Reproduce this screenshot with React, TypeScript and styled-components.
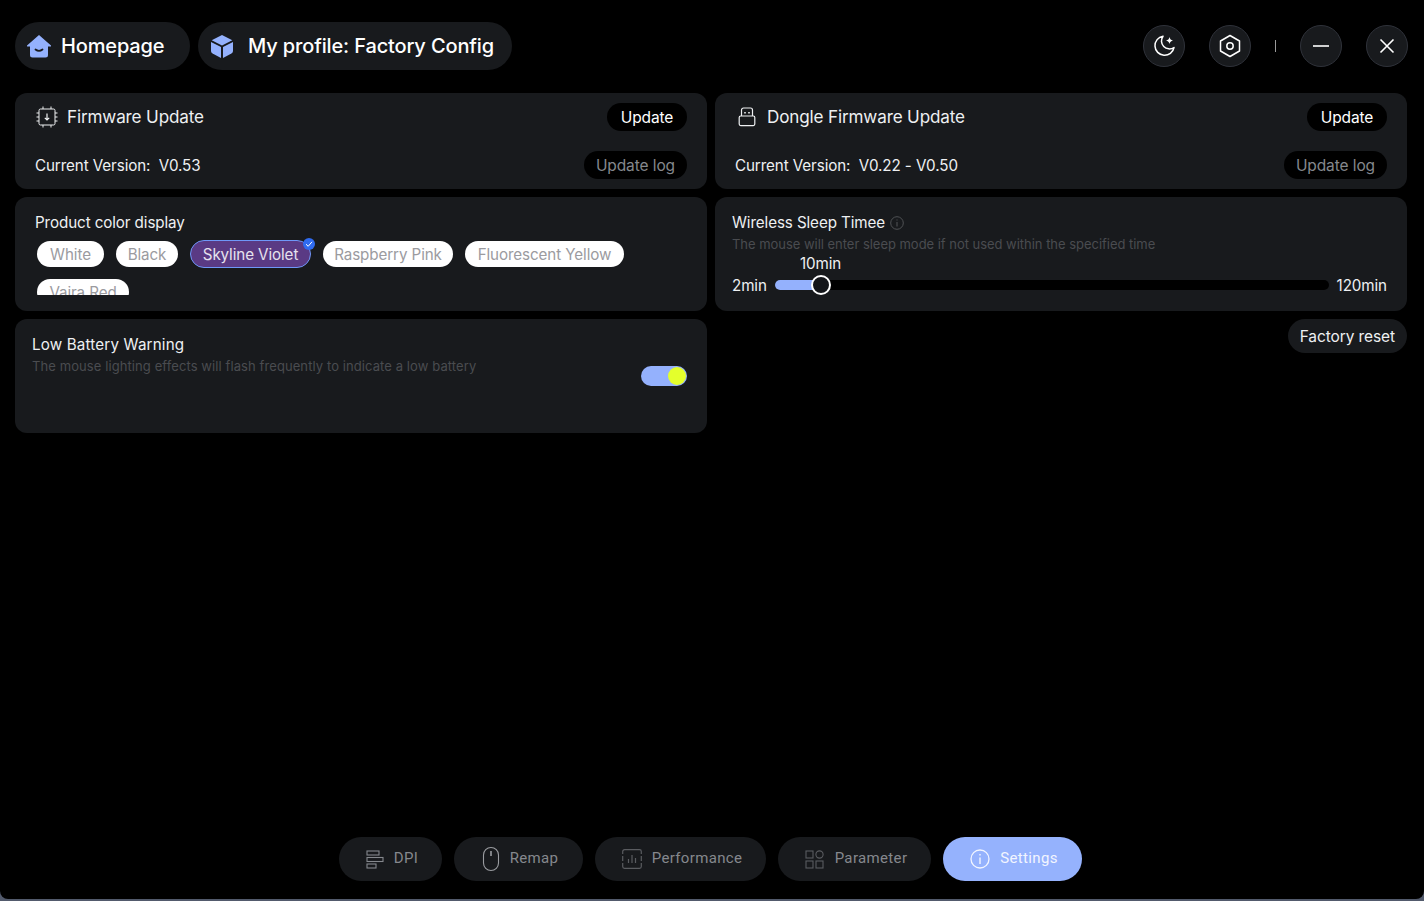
import React from "react";
import styled, { createGlobalStyle } from "styled-components";

const Global = createGlobalStyle`
  html, body { margin: 0; padding: 0; background: #4d5566; }
  body { font-family: "Inter", "Liberation Sans", sans-serif; overflow: hidden; }
  * { box-sizing: border-box; }
`;

const Screen = styled.div`
  width: 1424px; height: 901px; background: #525a6c; overflow: hidden;
`;
const Win = styled.div`
  width: 1424px; height: 899px; background: #000; border-radius: 0 0 8px 8px;
  padding: 22px 17px 18px 15px; display: flex; flex-direction: column;
`;
const Header = styled.header`
  display: flex; align-items: center; height: 48px; margin-bottom: 23px;
`;
const TopPill = styled.div<{ $w: number; $gap: number; $pl: number }>`
  width: ${p => p.$w}px; height: 48px; border-radius: 24px; background: #181a1d;
  display: flex; align-items: center; gap: ${p => p.$gap}px; padding-left: ${p => p.$pl}px;
  color: #fff; font-size: 20px; font-weight: 500; margin-right: 8px; white-space: nowrap;
  letter-spacing: -0.14px;
`;
const Right = styled.div`
  margin-left: auto; display: flex; align-items: center; margin-right: -1px;
`;
const RoundBtn = styled.button<{ $ml: number }>`
  width: 42px; height: 42px; border-radius: 50%; background: #181a1d; border: 1px solid #2f323a;
  display: flex; align-items: center; justify-content: center; padding: 0; margin-left: ${p => p.$ml}px;
`;
const Divider = styled.span`
  width: 1px; height: 12px; background: #9a9a9a; margin-left: 24px;
`;
const Grid = styled.main`
  display: grid; grid-template-columns: 692px 692px; gap: 8px; grid-template-rows: 96px 114px 114px;
`;
const Panel = styled.section`
  background: #181a1d; border-radius: 12px; position: relative; color: #fff; min-width: 0; overflow: hidden;
`;
const UpdatePanel = styled(Panel)`
  padding: 10px 20px 10px 20px; display: flex; flex-direction: column; justify-content: space-between;
`;
const Row = styled.div`
  display: flex; align-items: center; justify-content: space-between; height: 28px;
`;
const TitleWrap = styled.div<{ $gap: number; $pl: number }>`
  display: flex; align-items: center; gap: ${p => p.$gap}px; padding-left: ${p => p.$pl}px;
  font-size: 17.1px; line-height: 26px; color: #eef0f2; letter-spacing: -0.15px; margin-top: -1px;
`;
const Version = styled.div`
  font-size: 15.2px; color: #eef0f2; white-space: pre; letter-spacing: -0.1px;
`;
const SmallBtn = styled.button<{ $dim?: boolean }>`
  height: 28px; min-width: 80px; padding: 0 12px; border-radius: 14px; background: #000; border: none;
  font-family: inherit; font-size: 15.5px; letter-spacing: -0.1px; color: ${p => (p.$dim ? "#85888d" : "#fff")};
  white-space: nowrap;
`;
const ColorPanel = styled(Panel)`
  padding: 16px 20px 0;
`;
const SectionTitle = styled.div<{ $ls?: number }>`
  font-size: 15.2px; color: #eef0f2; line-height: 20px; letter-spacing: ${p => p.$ls ?? -0.1}px; white-space: nowrap;
`;
const ChipArea = styled.div`
  display: flex; flex-wrap: wrap; gap: 12px; height: 72px; margin-top: 8px; padding: 0 2px; align-content: flex-start;
  clip-path: inset(-4px -8px 18px -8px);
`;
const Chip = styled.div<{ $active?: boolean; $w: number }>`
  width: ${p => p.$w}px; height: ${p => (p.$active ? 28 : 26)}px; margin: ${p => (p.$active ? "-1px 0" : "0")};
  border-radius: 14px; position: relative;
  display: flex; align-items: center; justify-content: center; font-size: 15.2px; letter-spacing: -0.1px; white-space: nowrap;
  background: ${p => (p.$active ? "#5a3a84" : "#fff")};
  color: ${p => (p.$active ? "#e6e2ee" : "#9b9b9f")};
  border: ${p => (p.$active ? "1.5px solid #6f97f8" : "none")};
`;
const Badge = styled.span`
  position: absolute; top: -3px; right: -5px; width: 12px; height: 12px; border-radius: 50%; background: #2f6bf0;
  display: flex; align-items: center; justify-content: center;
`;
const SettingPanel = styled(Panel)`
  padding: 16px 20px 0 17px;
`;
const Desc = styled.div<{ $ls: number }>`
  font-size: 13px; color: #4a4c50; line-height: 18px; margin-top: 2px; white-space: nowrap; letter-spacing: ${p => p.$ls}px;
`;
const InlineTitle = styled.div`
  display: flex; align-items: center; gap: 5px;
`;
const SliderRow = styled.div`
  display: flex; align-items: center; gap: 8px; font-size: 15.2px; color: #eef0f2; height: 20px; margin-top: 22px; position: relative; letter-spacing: -0.1px;
`;
const Track = styled.div`
  flex: 1; height: 10px; border-radius: 5px; background: #000; position: relative;
`;
const Fill = styled.div`
  height: 10px; background: #94b1fd; border-radius: 5px 0 0 5px;
`;
const Knob = styled.div`
  position: absolute; top: -5px; width: 20px; height: 20px; border-radius: 50%; background: #14161a; border: 2px solid #fff; margin-left: -10px;
`;
const Tip = styled.div`
  position: absolute; top: -20px; left: 68px; width: 41px; white-space: nowrap; text-align: center; line-height: 18px;
`;
const Toggle = styled.div`
  position: absolute; left: 626px; top: 47px; width: 46px; height: 20px; border-radius: 10px; background: #94b1fd;
`;
const ToggleDot = styled.div`
  position: absolute; right: 1px; top: 1px; width: 18px; height: 18px; border-radius: 50%; background: #e4ff2c;
`;
const ResetCell = styled.div`
  display: flex; justify-content: flex-end; align-items: flex-start;
`;
const ResetBtn = styled.button`
  height: 34px; padding: 0 12px; border-radius: 17px; background: #181a1d; border: none; color: #eef0f2; font-family: inherit; font-size: 15.5px; letter-spacing: -0.1px;
`;
const Nav = styled.nav`
  margin-top: auto; margin-right: 1px; display: flex; justify-content: center; gap: 12px;
`;
const NavItem = styled.button<{ $w: number; $active?: boolean }>`
  width: ${p => p.$w}px; height: 44px; border-radius: 22px; border: none; padding: 0 0 0 3px;
  background: ${p => (p.$active ? "#95b2fd" : "#181a1d")};
  color: ${p => (p.$active ? "#f2f5ff" : "#85888d")};
  display: flex; align-items: center; justify-content: center; gap: 10px;
  font-family: Roboto, sans-serif; font-size: 15px; font-weight: 400; letter-spacing: 0.35px;
`;
const NavLabel = styled.span`
  margin-bottom: 2px;
`;

const HomeIcon = () => (
  <svg width="24" height="24" viewBox="0 0 24 24">
    <path d="M12 1 L24 11.5 a.6.6 0 0 1-.5 1 H21 V21 a2.5 2.5 0 0 1-2.5 2.5 H5.5 A2.5 2.5 0 0 1 3 21 V12.5 H.5 a.6.6 0 0 1-.5-1 Z" fill="#94b1fd" />
    <path d="M8.5 15.5 q3.5 2.6 7 0" stroke="#181a1d" strokeWidth="1.8" fill="none" strokeLinecap="round" />
  </svg>
);
const CubeIcon = () => (
  <svg width="24" height="24" viewBox="0 0 24 24" fill="#94b1fd">
    <path d="M12 1 L22.3 6.3 L12 11.4 L1.7 6.3 Z" />
    <path d="M1 8 L11 13 V24 L2.6 19.6 A3 3 0 0 1 1 17 Z" />
    <path d="M23 8 L13 13 V24 L21.4 19.6 A3 3 0 0 0 23 17 Z" />
  </svg>
);
const ChipIcon = () => (
  <svg width="22" height="22" viewBox="0 0 22 22" fill="none" stroke="#eef0f2" strokeWidth="1">
    <rect x="3" y="3" width="16" height="16" rx="1.5" />
    <path d="M7 3V0.5M15 3V0.5M7 21.5V19M15 21.5V19M0.5 7H3M0.5 11H3M0.5 15H3M19 7H21.5M19 11H21.5M19 15H21.5" />
    <path d="M11 7.5V13.5M8.8 11.8L11 14L13.2 11.8" strokeWidth="1.2" />
  </svg>
);
const DongleIcon = () => (
  <svg width="18" height="20" viewBox="0 0 18 20" fill="none" stroke="#eef0f2" strokeWidth="1.2">
    <path d="M3.5 9V3a2 2 0 0 1 2-2h7a2 2 0 0 1 2 2v6" />
    <rect x="1.2" y="9" width="15.6" height="9.6" rx="1.5" />
    <path d="M7 5v1.6M11 5v1.6" strokeWidth="1.6" />
  </svg>
);
const MoonIcon = () => (
  <svg width="24" height="24" viewBox="0 0 24 24" fill="none">
    <path d="M11 2.2 A9.6 9.6 0 1 0 22 13.5 A8 8 0 0 1 11 2.2 Z" stroke="#fff" strokeWidth="1.5" strokeLinejoin="round" />
    <path d="M17.5 3 Q18 6 21 6.5 Q18 7 17.5 10 Q17 7 14 6.5 Q17 6 17.5 3 Z" fill="#fff" />
  </svg>
);
const HexIcon = () => (
  <svg width="22" height="24" viewBox="0 0 22 24" fill="none" stroke="#fff" strokeWidth="1.5">
    <path d="M11 1.5 L20.5 7 V17 L11 22.5 L1.5 17 V7 Z" strokeLinejoin="round" />
    <circle cx="11" cy="12" r="3.2" />
  </svg>
);
const MinusIcon = () => (
  <svg width="16" height="4" viewBox="0 0 16 4"><path d="M0 2H16" stroke="#fff" strokeWidth="1.6" /></svg>
);
const CloseIcon = () => (
  <svg width="16" height="16" viewBox="0 0 16 16"><path d="M1.5 1.5L14.5 14.5M14.5 1.5L1.5 14.5" stroke="#fff" strokeWidth="1.6" /></svg>
);
const InfoIcon = ({ size, color }: { size: number; color: string }) => (
  <svg width={size} height={size} viewBox="0 0 20 20" fill="none" stroke={color} strokeWidth="1.3">
    <circle cx="10" cy="10" r="9" />
    <path d="M10 8.5V15" strokeWidth="1.4" />
    <path d="M10 5V6.4" strokeWidth="1.4" />
  </svg>
);
const Check = () => (
  <svg width="8" height="8" viewBox="0 0 8 8" fill="none"><path d="M1 4.2L3.2 6.3L7 1.8" stroke="#fff" strokeWidth="1" /></svg>
);
const DpiIcon = () => (
  <svg width="18" height="19" viewBox="0 0 18 19" fill="none" stroke="#85888d" strokeWidth="1.1">
    <rect x="1" y="1" width="12" height="4" />
    <rect x="1" y="7.5" width="16" height="4" />
    <rect x="1" y="14" width="9" height="4" />
  </svg>
);
const MouseIcon = () => (
  <svg width="18" height="26" viewBox="0 0 18 26" fill="none" stroke="#9a9ca0" strokeWidth="1.1">
    <rect x="1.5" y="1.5" width="15" height="23" rx="7.5" />
    <path d="M9 5V10" strokeWidth="1.6" />
  </svg>
);
const PerfIcon = () => (
  <svg width="20" height="20" viewBox="0 0 20 20" fill="none" stroke="#5a5c60" strokeWidth="1.2">
    <path d="M0.7 5V2.5A1.8 1.8 0 0 1 2.5 0.7H17.5A1.8 1.8 0 0 1 19.3 2.5V5M0.7 14V17.5A1.8 1.8 0 0 0 2.5 19.3H17.5A1.8 1.8 0 0 0 19.3 17.5V14M0.7 7V12M19.3 7V12" />
    <path d="M6.5 10V14M10 6V14M13.5 9V14" />
  </svg>
);
const ParamIcon = () => (
  <svg width="20" height="19" viewBox="0 0 20 19" fill="none" stroke="#5a5c60" strokeWidth="1.1">
    <rect x="1" y="1" width="7" height="7" />
    <circle cx="14.5" cy="4.5" r="3.6" />
    <rect x="1" y="11" width="7" height="7" />
    <rect x="11" y="11" width="7" height="7" />
  </svg>
);

const chips = [
  { name: "White", w: 67 },
  { name: "Black", w: 62 },
  { name: "Skyline Violet", w: 121 },
  { name: "Raspberry Pink", w: 130 },
  { name: "Fluorescent Yellow", w: 159 },
  { name: "Vaira Red", w: 92 },
];

export default function App() {
  return (
    <Screen>
      <Global />
      <Win>
        <Header>
          <TopPill $w={175} $gap={10} $pl={12}><HomeIcon />Homepage</TopPill>
          <TopPill $w={314} $gap={14} $pl={12}><CubeIcon />My profile: Factory Config</TopPill>
          <Right>
            <RoundBtn $ml={0}><MoonIcon /></RoundBtn>
            <RoundBtn $ml={24}><HexIcon /></RoundBtn>
            <Divider />
            <RoundBtn $ml={24}><MinusIcon /></RoundBtn>
            <RoundBtn $ml={24}><CloseIcon /></RoundBtn>
          </Right>
        </Header>
        <Grid>
          <UpdatePanel>
            <Row>
              <TitleWrap $gap={9} $pl={1}><ChipIcon />Firmware Update</TitleWrap>
              <SmallBtn>Update</SmallBtn>
            </Row>
            <Row>
              <Version>Current Version:  V0.53</Version>
              <SmallBtn $dim>Update log</SmallBtn>
            </Row>
          </UpdatePanel>
          <UpdatePanel>
            <Row>
              <TitleWrap $gap={11} $pl={3}><DongleIcon />Dongle Firmware Update</TitleWrap>
              <SmallBtn>Update</SmallBtn>
            </Row>
            <Row>
              <Version>Current Version:  V0.22 - V0.50</Version>
              <SmallBtn $dim>Update log</SmallBtn>
            </Row>
          </UpdatePanel>
          <ColorPanel>
            <SectionTitle>Product color display</SectionTitle>
            <ChipArea>
              {chips.map((c, i) => (
                <Chip key={c.name} $w={c.w} $active={i === 2}>
                  {c.name}
                  {i === 2 && <Badge><Check /></Badge>}
                </Chip>
              ))}
            </ChipArea>
          </ColorPanel>
          <SettingPanel>
            <InlineTitle>
              <SectionTitle>Wireless Sleep Timee</SectionTitle>
              <InfoIcon size={14} color="#55575b" />
            </InlineTitle>
            <Desc $ls={-0.03}>The mouse will enter sleep mode if not used within the specified time</Desc>
            <SliderRow>
              <Tip>10min</Tip>
              2min
              <Track>
                <Fill style={{ width: 46 }} />
                <Knob style={{ left: 46 }} />
              </Track>
              120min
            </SliderRow>
          </SettingPanel>
          <SettingPanel>
            <SectionTitle $ls={0.16}>Low Battery Warning</SectionTitle>
            <Desc $ls={0.09}>The mouse lighting effects will flash frequently to indicate a low battery</Desc>
            <Toggle><ToggleDot /></Toggle>
          </SettingPanel>
          <ResetCell><ResetBtn>Factory reset</ResetBtn></ResetCell>
        </Grid>
        <Nav>
          <NavItem $w={103}><DpiIcon /><NavLabel>DPI</NavLabel></NavItem>
          <NavItem $w={129}><MouseIcon /><NavLabel>Remap</NavLabel></NavItem>
          <NavItem $w={171}><PerfIcon /><NavLabel>Performance</NavLabel></NavItem>
          <NavItem $w={153}><ParamIcon /><NavLabel>Parameter</NavLabel></NavItem>
          <NavItem $w={139} $active><InfoIcon size={20} color="#f2f5ff" /><NavLabel>Settings</NavLabel></NavItem>
        </Nav>
      </Win>
    </Screen>
  );
}
